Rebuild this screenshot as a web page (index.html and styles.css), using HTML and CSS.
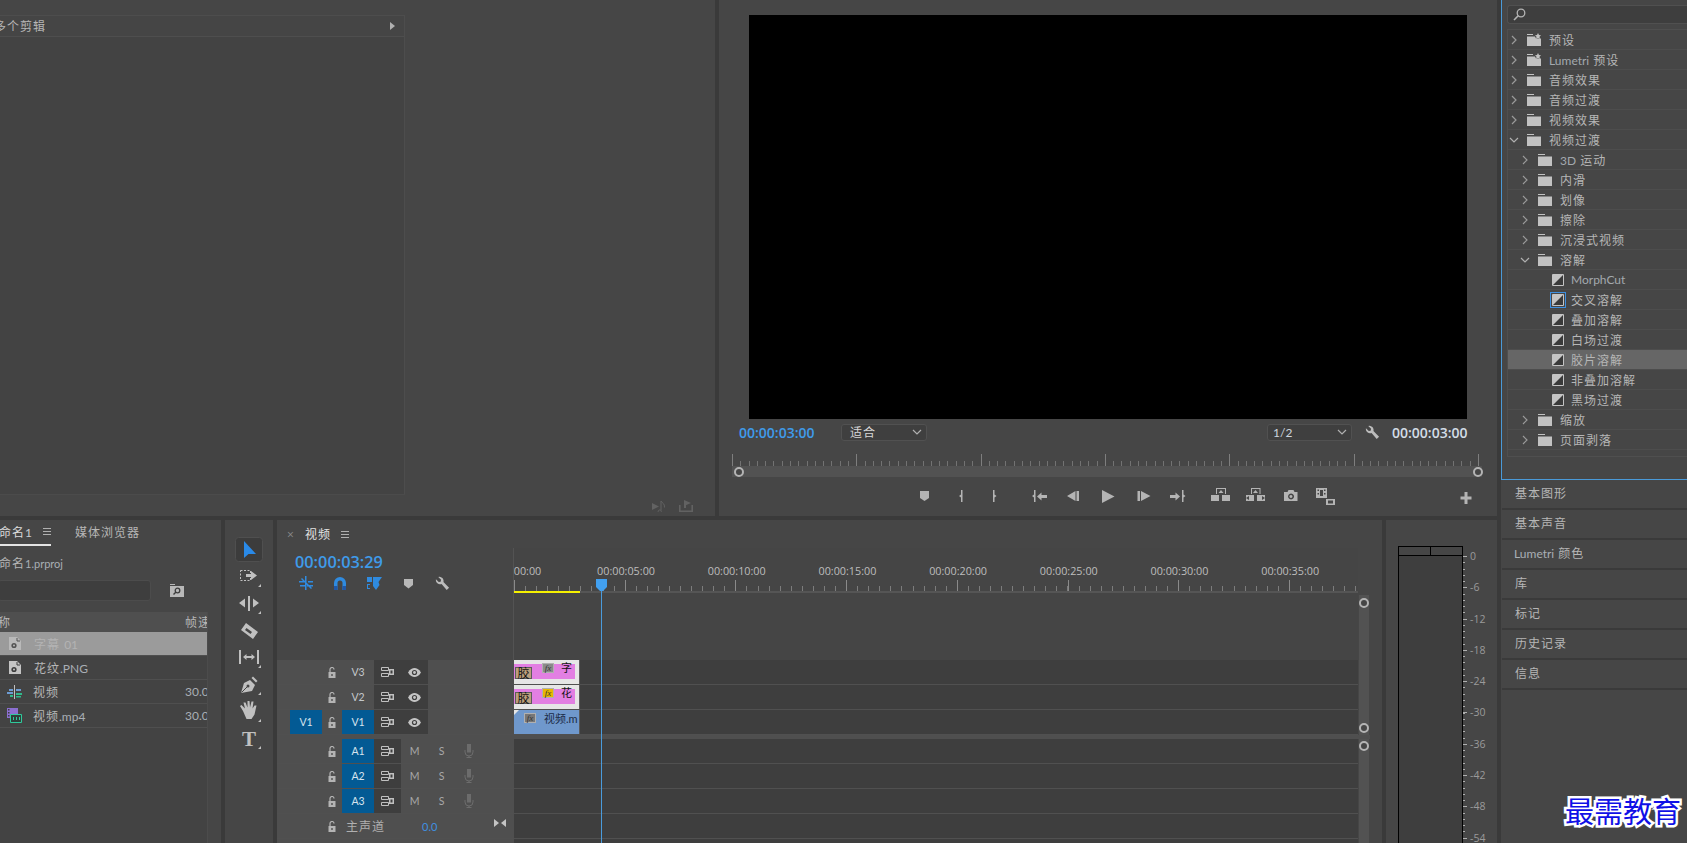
FILE: index.html
```html
<!DOCTYPE html>
<html lang="zh">
<head>
<meta charset="utf-8">
<title>Premiere</title>
<link rel="stylesheet" href="styles.css">
</head>
<body>
<svg class="defs" width="0" height="0">
  <symbol id="folder" viewBox="0 0 14 12"><path d="M0 0h7v1H0zM0 2.500h14V12H0z"/></symbol>
  <symbol id="folderstar" viewBox="0 0 14 13"><path d="M0 1h6v1H0zM0 3.500h8l1 2h5V13H0z"/><path d="M11 0l1 2 2 .3-1.500 1.500.4 2.200-1.900-1-1.900 1 .4-2.200L8 2.300l2-.3z"/></symbol>
  <symbol id="trans" viewBox="0 0 12 12"><path d="M.5.5h11v11H.5z" fill="#3a3a3a" stroke="#c4c4c4"/><path d="M1 1h10L1 11z" fill="#c4c4c4"/></symbol>
  <symbol id="lock" viewBox="0 0 9 11"><path d="M1 5h7v6H1z" fill="#b4b4b4"/><path d="M2.500 5V2.500a2 2 0 0 1 4 0" fill="none" stroke="#b4b4b4" stroke-width="1.200"/><path d="M3.800 7h1.400v2H3.800z" fill="#4f4f4f"/></symbol>
  <symbol id="film" viewBox="0 0 13 10"><path d="M.5.500h7v3h-7zM.5 6.500h7v3h-7z" fill="none" stroke="#c0c0c0"/><path d="M8 2h5v6H8z" fill="#c0c0c0"/><path d="M9.500 3.500h2v3h-2z" fill="#3e3e3e"/></symbol>
  <symbol id="eye" viewBox="0 0 13 9"><path d="M0 4.500C2 1 4.500 0 6.500 0S11 1 13 4.500C11 8 8.500 9 6.500 9S2 8 0 4.500z" fill="#c4c4c4"/><circle cx="6.500" cy="4.500" r="2.600" fill="#3e3e3e"/><circle cx="6.500" cy="4.500" r="1.400" fill="#c4c4c4"/></symbol>
  <symbol id="mic" viewBox="0 0 10 14"><path d="M3 0h4v8.500H3z" fill="#6c6c6c"/><path d="M1 6v2a4 4 0 0 0 8 0V6M5 12v2M2.500 13.500h5" fill="none" stroke="#6c6c6c"/></symbol>
  <symbol id="wrench" viewBox="0 0 16 16"><path d="M1 3.500a4.500 4.500 0 0 0 6 5L12.500 15 15 12.500 9 6.500A4.500 4.500 0 0 0 3.500 1l3 3-.5 2-2 .5z" fill="#bcbcbc"/></symbol>
  <symbol id="chevr" viewBox="0 0 6 10"><path d="M1 1l4 4-4 4" fill="none" stroke="#9a9a9a" stroke-width="1.200"/></symbol>
  <symbol id="chevd" viewBox="0 0 10 6"><path d="M1 1l4 4 4-4" fill="none" stroke="#b0b0b0" stroke-width="1.200"/></symbol>
  <symbol id="png" viewBox="0 0 12 13"><path d="M0 0h8l4 4v9H0z" fill="#c4c4c4"/><circle cx="5" cy="8.500" r="2.600" fill="#3c3c3c"/><circle cx="5" cy="8.500" r="1" fill="#c4c4c4"/><path d="M8 1v3h3" fill="none" stroke="#3c3c3c"/></symbol>
</svg>

<div class="app">
  <div class="left">
    <div class="top">
      <section class="panel source">
        <div class="srcbox">
          <div class="srchead"><span class="srctitle">多个剪辑</span><span class="srcarrow"></span></div>
          <div class="srcbody"></div>
        </div>
        <div class="srcfoot">
          <svg class="srcico" width="14" height="12" viewBox="0 0 14 12"><path d="M0 3l7 3.500L0 10zM9 2.500V10" fill="#626262"/><path d="M9 10.500V1c1 2 4 2.500 3.500 6.500M9 10.500a1.600 1.400 0 1 1-.1-.1" fill="none" stroke="#626262"/></svg>
          <svg class="srcico" width="14" height="12" viewBox="0 0 14 12"><path d="M.8 5v6.200h12.400V5" fill="none" stroke="#626262" stroke-width="1.600"/><path d="M5 0l7 3-7 3z" fill="#626262"/><path d="M5 3h2v5H5z" fill="#626262"/></svg>
        </div>
      </section>

      <section class="panel program">
        <div class="video"></div>
        <div class="pinfo">
          <span class="tc tc-in">00:00:03:00</span>
          <div class="drop drop-fit"><span>适合</span><svg width="10" height="6"><use href="#chevd"/></svg></div>
          <div class="drop drop-half"><span class="lat">1/2</span><svg width="10" height="6"><use href="#chevd"/></svg></div>
          <svg class="pwrench" width="15" height="15"><use href="#wrench"/></svg>
          <span class="tc tc-out">00:00:03:00</span>
        </div>
        <div class="pruler"></div>
        <div class="ptrack"><i class="knob knob-l"></i><i class="knob knob-r"></i></div>
        <svg class="transport" width="778" height="30" viewBox="719 484 778 30">
          <g fill="#b4b4b4">
            <path d="M920 491h9v7l-4.500 3-4.500-3z"/>
            <path d="M961 490h1.500v12H961v-4.500l-2-1.500 2-1.500z"/>
            <path d="M993 490h1.500v4.500l2 1.500-2 1.500v4.500H993z"/>
            <path d="M1034 490h1.500v12H1034v-4.500l-2-1.500 2-1.500zM1037 496.500l4.500-4v2.500h5.500v3h-5.500v2.500z"/>
            <path d="M1067 496l8.500-5v10zM1076.500 491h2.500v10h-2.500z"/>
            <path d="M1102 490l12.500 6.500-12.500 6.500z"/>
            <path d="M1137.500 491h2.500v10h-2.500zM1141 491l9.500 5-9.500 5z"/>
            <path d="M1170 495h5.500v-2.500l4.500 4-4.500 4V498H1170zM1182 490h1.500v4.500l2 1.500-2 1.500v4.500H1182z"/>
            <path d="M1216 488h10v6h-1V489h-8v5h-1zM1221 490l2.500 3h-5zM1211 495h8v6h-8zM1222 495h8v6h-8z"/>
            <path d="M1251 488h9.500v6h-1v-5h-7.500v5h-1zM1255.500 490l2.500 3h-5zM1246 495h8v6h-8zM1257 495h8v6h-8z"/>
            <path fill-rule="evenodd" d="M1284 492h3.500l1-2h5l1 2h3v9h-13.500zM1291 493.500a3 3 0 1 0 .1 0zM1291 495a1.500 1.500 0 1 1-.1 0z"/>
            <path fill-rule="evenodd" d="M1316 488h11v10h-11zM1317.500 489.500v1.500h1.500v-1.500zM1324 489.500v1.500h1.500v-1.500zM1320 490v6h3v-6zM1317.500 493v1.500h1.500V493zM1324 493v1.500h1.500V493z"/>
            <path fill-rule="evenodd" d="M1326 499h9v6h-9zM1328 500.500v3h5v-3z"/>
            <path d="M1464.500 492h3v4.500h4v3h-4v4.500h-3v-4.500h-4v-3h4z"/>
          </g>
          <g fill="#464646"><path d="M1246 498l3-2v4zM1265 498l-3-2v4z"/></g>
        </svg>
      </section>
    </div>

    <div class="bottom">
      <section class="panel project">
        <div class="ptabs">
          <div class="ptab-on"><span class="ptab-name">命名<span class="lat">1</span></span><span class="burger"></span></div>
          <span class="ptab-off">媒体浏览器</span>
        </div>
        <div class="pname">命名<span class="lat">1.prproj</span></div>
        <div class="psearch">
          <div class="pbox"></div>
          <svg class="pbin" width="14" height="13" viewBox="0 0 14 13"><path d="M0 0h5v1H0zM0 2h14v11H0z" fill="#b8b8b8"/><circle cx="7.500" cy="6.500" r="2.300" fill="none" stroke="#3c3c3c" stroke-width="1.300"/><path d="M6 8l-2.500 2.500" stroke="#3c3c3c" stroke-width="1.500"/></svg>
        </div>
        <div class="plist">
          <div class="phead"><span class="pcol">称</span><span class="prate">帧速率</span></div>
          <div class="prow prow-sel"><svg class="pico" width="12" height="13"><use href="#png"/></svg><span class="pcol">字幕 <span class="lat">01</span></span></div>
          <div class="prow"><svg class="pico" width="12" height="13"><use href="#png"/></svg><span class="pcol">花纹<span class="lat">.PNG</span></span></div>
          <div class="prow"><svg class="pico pico-w" width="15" height="14" viewBox="0 0 15 14"><path d="M7 0h1v14H7z" fill="#c0c0c0"/><path d="M2 4h4v2H2zM0 7h6v2H0z" fill="#6d9bd1"/><path d="M9 4h5v2H9z" fill="#6d9bd1"/><path d="M9 8h6v2H9zM3 10h3v2H3zM9 11h5v1.500H9z" fill="#2fb98b"/></svg><span class="pcol pcol-w">视频</span><span class="prate lat">30.00 fps</span></div>
          <div class="prow"><svg class="pico pico-w" width="15" height="15" viewBox="0 0 15 15"><path d="M0 0h11v10H0z" fill="#8b6fd0"/><path d="M1 1h1.500v1.500H1zM1 4h1.500v1.500H1zM1 7h1.500v1.500H1z" fill="#3c3c3c"/><path d="M3.500 6.500h11v8h-11z" fill="#2f3f3a" stroke="#2fc99b"/><path d="M6 9h1v3H6zM9 9h1v3H9zM12 9h1v3h-1z" fill="#2fc99b"/></svg><span class="pcol pcol-w">视频<span class="lat">.mp4</span></span><span class="prate lat">30.00 fps</span></div>
        </div>
      </section>

      <section class="panel tools">
        <svg width="48" height="323" viewBox="225 520 48 323">
          <rect x="235.500" y="537.500" width="27" height="24" rx="3" fill="#3c3c3c" stroke="#4f4f4f"/>
          <path d="M244 541v17l4.500-4h7.500z" fill="#2a8ae8"/>
          <path d="M240.500 570.500h10v10h-10z" fill="none" stroke="#c0c0c0" stroke-dasharray="2 1.500"/>
          <g fill="#c0c0c0">
            <path d="M246 574h5v-3l6 4.500-6 4.500v-3h-5z"/>
            <path d="M258 587l3-3v3zM258 614l3-3v3zM258 668l3-3v3zM258 695l3-3v3zM258 722l3-3v3zM258 749l3-3v3z"/>
            <path d="M248 596h2v15h-2zM239 603l6-4.500v9zM259 603l-6-4.500v9z"/>
            <path fill-rule="evenodd" d="M246 623l12 9-5 7-12-9zM246.500 628l-1.500 2 5.500 4 1.500-2z"/>
            <path d="M239 650h2v14h-2zM257 650h2v14h-2zM243 657l3.500-3v2h5v-2l3.500 3-3.500 3v-2h-5v2z"/>
            <path d="M241 693l3-10 6-3 5 5-3 6z"/>
            <path d="M251.500 678l1.500-1.500 4.500 4.500-1.500 1.500z"/>
            <path d="M243 711l-3-5 1.500-1 3.500 3.500-1.500-6h2l2 5v-6.500h2l.5 6.500 1.500-6h2l-1 7 2-3h2l-2 9-3 4.500h-5z"/>
          </g>
          <path d="M241.500 692.500L247 687" stroke="#464646"/>
          <circle cx="248" cy="686" r="1.500" fill="#464646"/>
          <text class="tool-t" x="249" y="746">T</text>
        </svg>
      </section>

      <section class="panel timeline">
        <div class="ttab"><span class="tx">×</span><span class="ttitle">视频</span><span class="burger"></span></div>
        <div class="tbody">
          <div class="tmain">
            <div class="tupper">
              <div class="tctl">
                <div class="tcode">00:00:03:29</div>
                <svg class="tctl-ico" width="170" height="20" viewBox="290 574 170 20">
                  <g fill="#2f8be0">
                    <path d="M305 576h1.500v14H305zM299 581h5v1.500h-5zM308 581h5v1.500h-5zM300 585h5v1.500h-5zM307 585h6v1.500h-6zM302 578l10 10-1 1-10-10z"/>
                    <path d="M334 590v-7a6 6 0 0 1 12 0v7h-3.500v-7a2.500 2.500 0 0 0-5 0v7z"/>
                    <path d="M367 577h5v5h-5zM373 577h9l-3.500 5 1 3-3.500 5-3-4zM367 584h3v1h-2v3h2v1h-3z"/>
                  </g>
                  <path fill="#2058a8" d="M334 586h3.500v4H334zM342.500 586h3.500v4h-3.500z"/>
                  <path fill="#b8b8b8" d="M404 579h9v6l-4.500 3.500L404 585z"/>
                  <use href="#wrench" x="435" y="576" width="15" height="15"/>
                </svg>
              </div>
              <div class="truler">
                <div class="rlabels">
                  <span>00:00:00:00</span><span>00:00:05:00</span><span>00:00:10:00</span><span>00:00:15:00</span><span>00:00:20:00</span><span>00:00:25:00</span><span>00:00:30:00</span><span>00:00:35:00</span>
                </div>
                <div class="rticks"></div>
                <div class="rbar"><i class="rwork"></i></div>
              </div>
            </div>

            <div class="track">
              <div class="thead"><i class="c-spc"></i><i class="c-patch"></i><svg class="c-lock" width="20" height="11"><use href="#lock" x="5.500" width="9" height="11"/></svg><span class="c-target">V3</span><span class="c-dark"><svg width="13" height="10"><use href="#film"/></svg></span><span class="c-dark"><svg width="13" height="9"><use href="#eye"/></svg></span></div>
              <div class="lane"><div class="clip clip-pink"><i class="pink"></i><span class="gum">胶</span><span class="fx">fx</span><span class="cname">字</span></div></div>
            </div>
            <div class="track">
              <div class="thead"><i class="c-spc"></i><i class="c-patch"></i><svg class="c-lock" width="20" height="11"><use href="#lock" x="5.500" width="9" height="11"/></svg><span class="c-target">V2</span><span class="c-dark"><svg width="13" height="10"><use href="#film"/></svg></span><span class="c-dark"><svg width="13" height="9"><use href="#eye"/></svg></span></div>
              <div class="lane"><div class="clip clip-pink"><i class="pink"></i><span class="gum">胶</span><span class="fx fx-y">fx</span><span class="cname">花</span></div></div>
            </div>
            <div class="track">
              <div class="thead"><i class="c-spc"></i><span class="c-patch c-on">V1</span><svg class="c-lock" width="20" height="11"><use href="#lock" x="5.500" width="9" height="11"/></svg><span class="c-target c-on">V1</span><span class="c-dark"><svg width="13" height="10"><use href="#film"/></svg></span><span class="c-dark"><svg width="13" height="9"><use href="#eye"/></svg></span></div>
              <div class="lane"><div class="clip clip-blue"><i class="notch"></i><span class="fx fx-b">fx</span><span class="cname cname-b">视频<span class="lat">.m</span></span></div></div>
            </div>
            <div class="tdiv"></div>
            <div class="track">
              <div class="thead"><i class="c-spc"></i><i class="c-patch"></i><svg class="c-lock" width="20" height="11"><use href="#lock" x="5.500" width="9" height="11"/></svg><span class="c-target c-on">A1</span><span class="c-dark"><svg width="13" height="10"><use href="#film"/></svg></span><span class="c-btn">M</span><span class="c-btn">S</span><span class="c-btn"><svg width="10" height="14"><use href="#mic"/></svg></span></div>
              <div class="lane"></div>
            </div>
            <div class="track">
              <div class="thead"><i class="c-spc"></i><i class="c-patch"></i><svg class="c-lock" width="20" height="11"><use href="#lock" x="5.500" width="9" height="11"/></svg><span class="c-target c-on">A2</span><span class="c-dark"><svg width="13" height="10"><use href="#film"/></svg></span><span class="c-btn">M</span><span class="c-btn">S</span><span class="c-btn"><svg width="10" height="14"><use href="#mic"/></svg></span></div>
              <div class="lane"></div>
            </div>
            <div class="track">
              <div class="thead"><i class="c-spc"></i><i class="c-patch"></i><svg class="c-lock" width="20" height="11"><use href="#lock" x="5.500" width="9" height="11"/></svg><span class="c-target c-on">A3</span><span class="c-dark"><svg width="13" height="10"><use href="#film"/></svg></span><span class="c-btn">M</span><span class="c-btn">S</span><span class="c-btn"><svg width="10" height="14"><use href="#mic"/></svg></span></div>
              <div class="lane"></div>
            </div>
            <div class="track">
              <div class="thead"><i class="c-spc"></i><i class="c-patch"></i><svg class="c-lock" width="20" height="11"><use href="#lock" x="5.500" width="9" height="11"/></svg><span class="c-master">主声道</span><span class="c-vol">0.0</span><svg class="c-bow" width="12" height="8" viewBox="0 0 12 8"><path d="M0 0l5 4-5 4zM12 0L7 4l5 4z" fill="#c4c4c4"/></svg></div>
              <div class="lane"></div>
            </div>
            <div class="track track-end">
              <div class="thead"></div>
              <div class="lane"></div>
            </div>
          </div>

          <div class="tscroll">
            <div class="sb sb-top"><i class="knob"></i><i class="knob"></i></div>
            <div class="sb sb-bot"><i class="knob"></i></div>
          </div>

          <div class="playhead">
            <svg width="11" height="12" viewBox="0 0 11 12"><path d="M0 0h11v8l-4 4H4L0 8z" fill="#42a0f0"/></svg>
            <i></i>
          </div>
        </div>
      </section>

      <section class="panel meter">
        <div class="mbox"><div class="mtop"><i></i><i></i></div><div class="mbody"></div></div>
        <div class="mscale">
          <span>0</span><span>-6</span><span>-12</span><span>-18</span><span>-24</span><span>-30</span><span>-36</span><span>-42</span><span>-48</span><span>-54</span>
        </div>
      </section>
    </div>
  </div>

  <aside class="right">
    <section class="effects">
      <div class="esearch"><svg width="13" height="13" viewBox="0 0 13 13"><circle cx="8" cy="5" r="3.800" fill="none" stroke="#b4b4b4" stroke-width="1.300"/><path d="M5.200 7.800L1 12" stroke="#b4b4b4" stroke-width="1.600"/></svg></div>
      <div class="tree">
        <div class="row l0"><svg class="chev" width="6" height="10"><use href="#chevr"/></svg><svg class="ficon" width="14" height="13"><use href="#folderstar"/></svg><span>预设</span></div>
        <div class="row l0"><svg class="chev" width="6" height="10"><use href="#chevr"/></svg><svg class="ficon" width="14" height="13"><use href="#folderstar"/></svg><span class="tight"><span class="lat">Lumetri</span> 预设</span></div>
        <div class="row l0"><svg class="chev" width="6" height="10"><use href="#chevr"/></svg><svg class="ficon" width="14" height="12"><use href="#folder"/></svg><span>音频效果</span></div>
        <div class="row l0"><svg class="chev" width="6" height="10"><use href="#chevr"/></svg><svg class="ficon" width="14" height="12"><use href="#folder"/></svg><span>音频过渡</span></div>
        <div class="row l0"><svg class="chev" width="6" height="10"><use href="#chevr"/></svg><svg class="ficon" width="14" height="12"><use href="#folder"/></svg><span>视频效果</span></div>
        <div class="row l0"><svg class="chev cd" width="10" height="6"><use href="#chevd"/></svg><svg class="ficon" width="14" height="12"><use href="#folder"/></svg><span>视频过渡</span></div>
        <div class="row l1"><svg class="chev" width="6" height="10"><use href="#chevr"/></svg><svg class="ficon" width="14" height="12"><use href="#folder"/></svg><span class="tight"><span class="lat">3D</span> 运动</span></div>
        <div class="row l1"><svg class="chev" width="6" height="10"><use href="#chevr"/></svg><svg class="ficon" width="14" height="12"><use href="#folder"/></svg><span>内滑</span></div>
        <div class="row l1"><svg class="chev" width="6" height="10"><use href="#chevr"/></svg><svg class="ficon" width="14" height="12"><use href="#folder"/></svg><span>划像</span></div>
        <div class="row l1"><svg class="chev" width="6" height="10"><use href="#chevr"/></svg><svg class="ficon" width="14" height="12"><use href="#folder"/></svg><span>擦除</span></div>
        <div class="row l1"><svg class="chev" width="6" height="10"><use href="#chevr"/></svg><svg class="ficon" width="14" height="12"><use href="#folder"/></svg><span>沉浸式视频</span></div>
        <div class="row l1"><svg class="chev cd" width="10" height="6"><use href="#chevd"/></svg><svg class="ficon" width="14" height="12"><use href="#folder"/></svg><span>溶解</span></div>
        <div class="row l2"><svg class="ticon" width="12" height="12"><use href="#trans"/></svg><span class="lat">MorphCut</span></div>
        <div class="row l2"><svg class="ticon ticon-sel" width="12" height="12"><use href="#trans"/></svg><span>交叉溶解</span></div>
        <div class="row l2"><svg class="ticon" width="12" height="12"><use href="#trans"/></svg><span>叠加溶解</span></div>
        <div class="row l2"><svg class="ticon" width="12" height="12"><use href="#trans"/></svg><span>白场过渡</span></div>
        <div class="row l2 row-hi"><svg class="ticon" width="12" height="12"><use href="#trans"/></svg><span>胶片溶解</span></div>
        <div class="row l2"><svg class="ticon" width="12" height="12"><use href="#trans"/></svg><span>非叠加溶解</span></div>
        <div class="row l2"><svg class="ticon" width="12" height="12"><use href="#trans"/></svg><span>黑场过渡</span></div>
        <div class="row l1"><svg class="chev" width="6" height="10"><use href="#chevr"/></svg><svg class="ficon" width="14" height="12"><use href="#folder"/></svg><span>缩放</span></div>
        <div class="row l1"><svg class="chev" width="6" height="10"><use href="#chevr"/></svg><svg class="ficon" width="14" height="12"><use href="#folder"/></svg><span>页面剥落</span></div>
      </div>
    </section>
    <div class="bars">
      <div class="bar">基本图形</div>
      <div class="bar">基本声音</div>
      <div class="bar"><span class="lat">Lumetri</span> 颜色</div>
      <div class="bar">库</div>
      <div class="bar">标记</div>
      <div class="bar">历史记录</div>
      <div class="bar">信息</div>
    </div>
  </aside>
  <div class="watermark">最需教育</div>
</div>
</body>
</html>
```

FILE: styles.css
```css
* { box-sizing: border-box; }
html, body { margin: 0; height: 100%; overflow: hidden; }
body {
  background: #3a3a3a;
  color: #b6b6b6;
  font-family: "Open Sans", "Noto Sans CJK SC", sans-serif;
  font-size: 12px;
  letter-spacing: 1px;
}
i { display: block; font-style: normal; }
svg { display: block; flex: none; }
.defs { position: absolute; }
.lat { font-family: Lato, "Open Sans", sans-serif; letter-spacing: 0; color: #a9afb5; }

.app { position: relative; display: grid; grid-template-columns: 1497px 186px; column-gap: 4px; width: 1687px; height: 843px; overflow: hidden; }
.left { display: grid; grid-template-rows: 516px 323px; row-gap: 4px; }
.top { display: grid; grid-template-columns: 715px 778px; column-gap: 4px; }
.bottom { display: grid; grid-template-columns: 221px 48px 1105px 111px; column-gap: 4px; }
.panel { background: #464646; overflow: hidden; position: relative; }

/* source */
.source { padding-top: 15px; }
.srcbox { width: 406px; height: 480px; margin-left: -1px; border: 1px solid #4d4d4d; border-bottom-color: #4b4b4b; display: flex; flex-direction: column; }
.srchead { height: 21px; flex: none; display: flex; align-items: center; justify-content: space-between; padding-right: 9px; background: #454545; border-bottom: 1px solid #4e4e4e; }
.srctitle { margin-left: -6px; white-space: nowrap; }
.srcarrow { width: 0; height: 0; border-left: 5px solid #b0b0b0; border-top: 4px solid transparent; border-bottom: 4px solid transparent; }
.srcbody { flex: 1; background: #434343; }
.srcfoot { display: flex; justify-content: flex-end; gap: 13px; padding: 5px 22px 0 0; }

/* program */
.program { padding-top: 15px; }
.video { width: 718px; height: 404px; margin-left: 30px; background: #000; }
.pinfo { display: flex; align-items: center; height: 26px; }
.tc { font-size: 14px; letter-spacing: 0; font-weight: 600; white-space: nowrap; width: 76px; }
.tc-in { margin-left: 20px; color: #3f9bea; }
.tc-out { margin-left: 12px; color: #d3dde6; }
.drop { height: 17px; display: flex; align-items: center; justify-content: space-between; background: #3f3f3f; border: 1px solid #515151; border-radius: 3px; color: #d8d8d8; }
.drop-fit { width: 86px; margin-left: 26px; padding: 0 4px 0 8px; }
.drop-half { width: 85px; margin-left: 340px; padding: 0 4px 0 5px; }
.drop .lat { font-size: 12px; color: #ccd5de; }
.pwrench { margin-left: 13px; }
.pruler {
  width: 747px; height: 12px; margin: 9px 0 0 13px;
  background-image:
    repeating-linear-gradient(to right, #7e7e7e 0 1px, transparent 1px 124.3px),
    repeating-linear-gradient(to right, #727272 0 1px, transparent 1px 8.287px);
  background-size: 100% 12px, 100% 5px;
  background-position: 0 0, 0 100%;
  background-repeat: no-repeat;
}
.ptrack { position: relative; width: 750px; height: 11px; margin-left: 13px; background: #525252; }
.knob { width: 10px; height: 10px; border-radius: 50%; border: 2px solid #b4b4b4; background: #464646; flex: none; }
.knob-l, .knob-r { position: absolute; top: 1px; }
.knob-l { left: 2px; }
.knob-r { left: 741px; }
.transport { margin-top: 7px; }

/* project */
.ptabs { display: flex; align-items: flex-start; height: 26px; padding-top: 5px; }
.ptab-on { display: flex; align-items: center; flex: none; width: 51px; height: 21px; padding-bottom: 6px; border-bottom: 2px solid #e4e4e4; }
.ptab-name { color: #dcdcdc; margin-left: -1px; white-space: nowrap; flex: none; }
.ptab-name .lat { color: #c8ced4; }
.burger { width: 8px; height: 7px; margin-left: 10px; border-top: 1px solid #b0b0b0; border-bottom: 1px solid #b0b0b0; position: relative; flex: none; }
.burger::after { content: ""; position: absolute; left: 0; right: 0; top: 2px; height: 1px; background: #b0b0b0; }
.ptab-name + .burger { margin-left: 11px; }
.ptab-off { margin-left: 24px; line-height: 15px; }
.pname { margin: 9px 0 0 -1px; height: 17px; line-height: 17px; white-space: nowrap; }
.pname .lat { font-size: 11px; }
.psearch { display: flex; align-items: center; margin-top: 8px; height: 21px; }
.pbox { width: 153px; height: 21px; margin-left: -2px; background: #3e3e3e; border: 1px solid #4c4c4c; border-radius: 3px; }
.pbin { margin-left: 19px; }
.plist { width: 208px; margin-top: 11px; height: 231px; background: #434343; border-right: 1px solid #4c4c4c; }
.phead { display: flex; align-items: center; height: 20px; background: #4f4f4f; overflow: hidden; }
.prow { display: flex; align-items: center; height: 24px; border-bottom: 1px solid #4f4f4f; }
.prow-sel { background: #9b9b9b; color: #b3b3b3; }
.prow-sel .lat { color: #b3b3b3; }
.prow-sel .pico { opacity: .75; }
.pico { margin-left: 9px; }
.pico-w { margin-left: 7px; }
.pcol { flex: 1; margin-left: 13px; white-space: nowrap; }
.phead .pcol { margin-left: -2px; }
.pcol-w { margin-left: 11px; }
.prate { width: 22px; overflow: hidden; white-space: nowrap; flex: none; }

/* timeline */
.ttab { display: flex; align-items: center; height: 28px; padding-left: 10px; }
.tx { width: 18px; color: #8a8a8a; font-size: 12px; letter-spacing: 0; }
.ttitle { color: #e2e2e2; }
.tbody { position: relative; display: flex; }
.tmain { width: 1081px; }
.tupper { display: flex; height: 112px; }
.tctl { width: 236px; padding-top: 4px; }
.tcode { margin-left: 18px; font-size: 16.3px; line-height: 20px; letter-spacing: 0; font-weight: 600; color: #3f9bea; }
.tctl-ico { margin: 2px 0 0 13px; }
.truler { flex: 1; border-left: 1px solid #535353; overflow: hidden; background: #454545; }
.rlabels { display: flex; height: 32px; padding-top: 15px; margin-left: -54px; }
.rlabels span { width: 110.7px; flex: none; text-align: center; font-size: 10.8px; line-height: 16px; letter-spacing: 0; color: #bdbdbd; white-space: nowrap; }
.rlabels span:first-child { position: relative; left: -3px; }
.rticks {
  height: 11px;
  background-image:
    repeating-linear-gradient(to right, #8a8a8a 0 1px, transparent 1px 110.7px),
    repeating-linear-gradient(to right, #7c7c7c 0 1px, transparent 1px 11.07px);
  background-size: 100% 11px, 100% 5px;
  background-position: 0 0, 0 100%;
  background-repeat: no-repeat;
}
.rbar { height: 2px; background: #555; }
.rwork { width: 66px; height: 2px; background: #f5f000; }

.track { display: flex; height: 25px; border-bottom: 1px solid #505050; }
.track-end { border-bottom: 0; }
.thead { display: flex; align-items: center; width: 237px; flex: none; background: #4f4f4f; font: 10.5px Lato, sans-serif; letter-spacing: 0; color: #c4c8cc; }
.lane { flex: 1; display: flex; background: #3e3e3e; }
.c-spc { width: 13px; }
.c-patch { width: 32px; height: 100%; display: flex; align-items: center; justify-content: center; }
.c-lock { width: 20px; }
.c-target { width: 32px; height: 100%; display: flex; align-items: center; justify-content: center; }
.c-on { background: #035a94; color: #d8e4ee; }
.c-dark { width: 27px; height: 100%; display: flex; align-items: center; justify-content: center; background: #3e3e3e; }
.c-btn { width: 27px; display: flex; align-items: center; justify-content: center; color: #a8a8a8; }
.c-master { margin-left: 4px; width: 76px; font: 12px "Open Sans", "Noto Sans CJK SC", sans-serif; letter-spacing: 1px; color: #b0b0b0; }
.c-vol { width: 72px; font-size: 11px; color: #3f90e0; }
.c-bow { margin-bottom: 6px; }
.tdiv { height: 4px; background: #4f4f4f; width: 1093px; position: relative; }

.clip { position: relative; width: 66px; height: 24px; overflow: hidden; border-right: 1px solid #5a5a5a; letter-spacing: 0; }
.clip-pink { background: #e6e6e6; }
.clip-blue { background: #6f98cc; }
.pink { position: absolute; left: 0; top: 4px; width: 61px; height: 15px; background: #e27fe2; }
.gum { position: absolute; left: 1px; top: 7px; width: 17px; height: 12px; background: #bb9f7c; border: 1px solid #5c5c5c; color: #111; font: 12px/10px "Noto Sans CJK SC", sans-serif; text-align: center; }
.fx { position: absolute; left: 28px; top: 3px; width: 12px; height: 10px; background: #8a8a8a; border: 1px solid #b0b0b0; color: #333; font: italic 9px/8px "Liberation Serif", serif; text-align: center; }
.fx-y { background: #e8b800; }
.fx-b { left: 10px; background: #777; }
.cname { position: absolute; left: 47px; top: 1px; color: #111; font: 11px/13px "Noto Sans CJK SC", sans-serif; white-space: nowrap; }
.cname-b { left: 30px; top: 2px; color: #1b2b46; }
.cname-b .lat { color: #1b2b46; }
.notch { position: absolute; left: 0; top: 0; width: 0; height: 0; border-top: 5px solid #e6e6e6; border-right: 5px solid transparent; }

.tscroll { width: 10px; margin-left: 1px; padding-top: 47px; display: flex; flex-direction: column; position: relative; }
.sb { display: flex; flex-direction: column; justify-content: space-between; background: #525252; align-items: center; }
.sb-top { height: 140px; padding: 3px 0 2px; margin-bottom: 4px; }
.sb-bot { flex: 1; height: 104px; padding-top: 2px; }
.playhead { position: absolute; left: 319px; top: 31px; bottom: 0; display: flex; flex-direction: column; align-items: center; }
.playhead i { flex: 1; width: 1px; background: #4a9bdc; }

/* meter */
.meter { display: flex; align-items: flex-start; padding: 21px 0 0 12px; }
.mbox { width: 65px; height: 310px; margin-top: 5px; border: 1px solid #000; border-bottom: 0; flex: none; }
.mtop { display: flex; height: 9px; border-bottom: 1px solid #000; }
.mtop i { flex: 1; }
.mtop i + i { border-left: 1px solid #000; }
.mbody { height: 300px; background: #3e3e3e; }
.mscale {
  display: flex; flex-direction: column; padding-left: 7px; height: 320px;
  background-image:
    repeating-linear-gradient(to bottom, #b0b0b0 0 1px, transparent 1px 31.3px),
    repeating-linear-gradient(to bottom, #b0b0b0 0 1px, transparent 1px 6.26px);
  background-size: 4px 320px, 2px 320px;
  background-position: 0 15px, 0 15px;
  background-repeat: no-repeat;
}
.mscale span { height: 31.3px; line-height: 31.3px; font-size: 10.5px; letter-spacing: 0; color: #9a9a9a; }

/* right */
.right { display: flex; flex-direction: column; background: #464646; }
.effects { height: 480px; border-left: 1px solid #4a9ad8; border-bottom: 1px solid #4a9ad8; padding: 5px 0 0 4px; flex: none; }
.esearch { height: 19px; margin-left: 1px; padding-left: 5px; display: flex; align-items: center; background: #3e3e3e; border: 1px solid #505050; border-right: 0; border-radius: 3px 0 0 3px; }
.tree { margin: 5px 0 0 1px; height: 428px; border: 1px solid #4f4f4f; border-right: 0; }
.row { display: flex; align-items: center; height: 20px; border-bottom: 1px solid #4d4d4d; white-space: nowrap; }
.tree .lat { color: #a3a9ae; }
.chev { margin-right: 10px; }
.cd { margin-left: -2px; margin-right: 8px; }
.ficon { fill: #c2c2c2; margin-right: 8px; }
.l0 { padding-left: 3px; }
.l1 { padding-left: 14px; }
.l2 { padding-left: 44px; }
.ticon { margin-right: 7px; }
.ticon-sel { outline: 1px solid #3d8fe0; outline-offset: 1px; }
.row-hi { background: #666; }
.bars { flex: 1; padding-left: 1px; }
.bar { height: 30px; padding: 0 0 2px 13px; display: flex; align-items: center; gap: 4px; border-bottom: 2px solid #3a3a3a; white-space: nowrap; }
.bar .lat { margin-left: -1px; }

.watermark {
  position: absolute; left: 1565px; top: 793px;
  font-family: "Noto Sans CJK SC", sans-serif; font-weight: 400; font-size: 29px; line-height: 34px; letter-spacing: 0;
  color: #1010e6; white-space: nowrap;
  -webkit-text-stroke: 5px #fff; paint-order: stroke fill;
}
.tool-t { font: bold 21px "Liberation Serif", serif; fill: #c0c0c0; text-anchor: middle; letter-spacing: 0; }
```
